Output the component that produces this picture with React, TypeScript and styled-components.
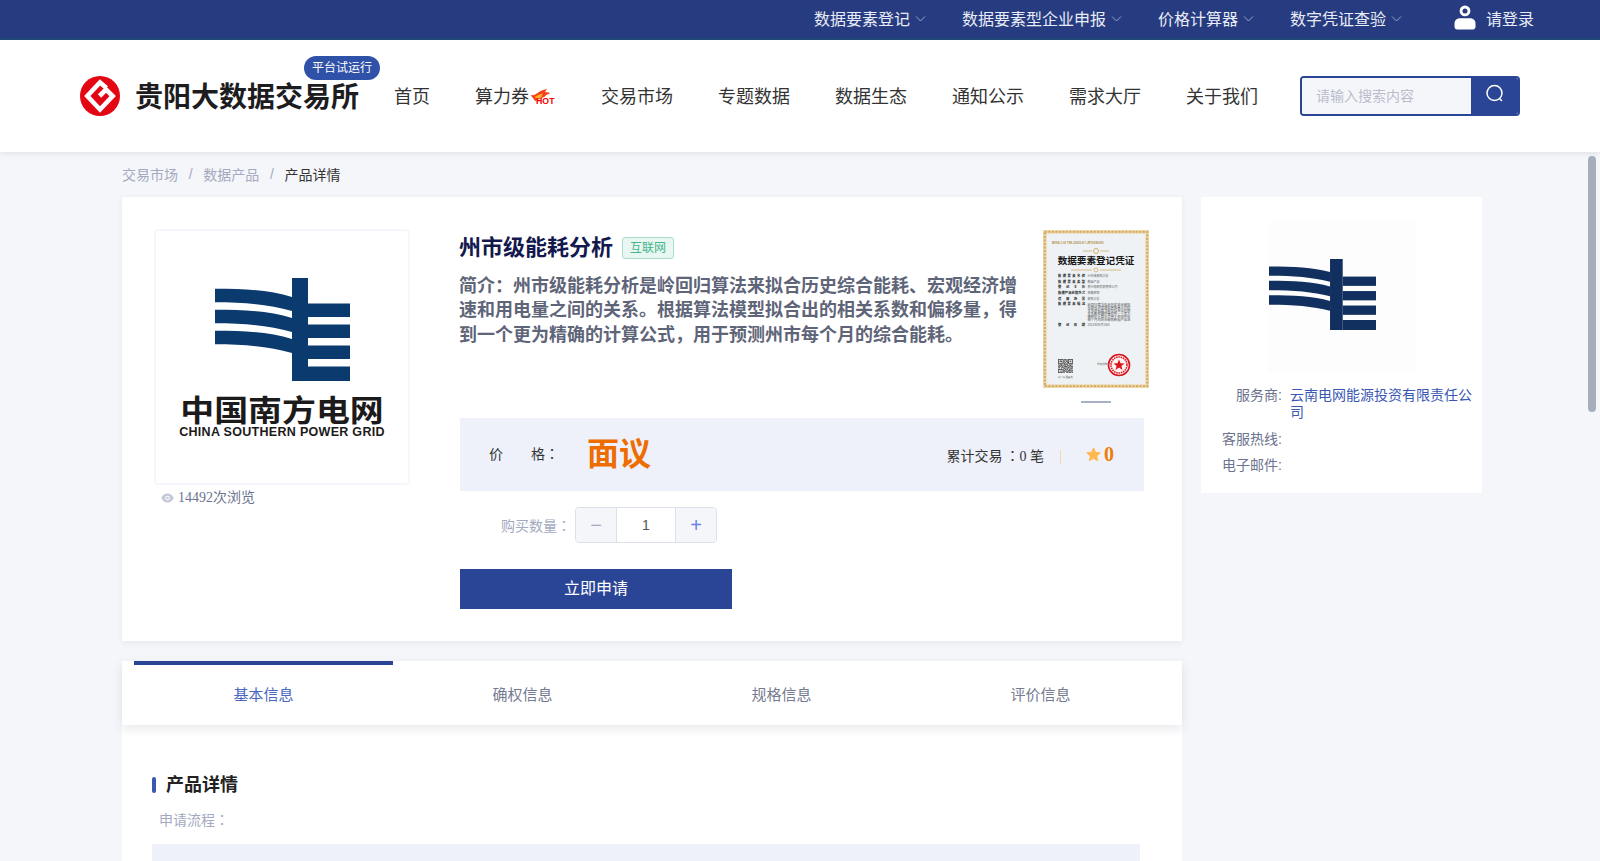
import React from 'react';
import styled, { createGlobalStyle } from 'styled-components';

const SANS = `"Liberation Sans", "Noto Sans CJK SC", sans-serif`;
const SERIF = `"Liberation Serif", "Noto Sans CJK SC", serif`;

const GlobalStyle = createGlobalStyle`
    html, body {
        margin: 0;
        padding: 0;
        height: 100%;
        overflow: hidden;
        background: #f5f6fa;
        font-family: ${SANS};
        text-spacing-trim: space-all;
    }
    * {
        box-sizing: border-box;
    }
`;

const topLinks = ['数据要素登记', '数据要素型企业申报', '价格计算器', '数字凭证查验'];
const navLinks = ['交易市场', '专题数据', '数据生态', '通知公示', '需求大厅', '关于我们'];
const tabs = ['基本信息', '确权信息', '规格信息', '评价信息'];

const Chevron = () => (
    <svg width="11" height="11" viewBox="0 0 11 11" fill="none" stroke="#9aa5c8" strokeWidth="1">
        <path d="M1 3.5 L5.5 8 L10 3.5" />
    </svg>
);

const UserIcon = () => (
    <svg width="22" height="26" viewBox="0 0 22 26" fill="#fff">
        <path d="M11 0.5a5.4 5.4 0 1 1 0 10.8a5.4 5.4 0 0 1 0-10.8zM11 3.4a2.5 2.5 0 1 0 0 5a2.5 2.5 0 0 0 0-5z" fillRule="evenodd" />
        <path d="M6 13.2h10c3.2 0 5.5 2.2 5.5 5.2v3.4c0 1.6-1.2 2.7-2.6 2.7H3.100c-1.400 0-2.600-1.100-2.600-2.700v-3.400c0-3 2.300-5.200 5.500-5.200z" />
    </svg>
);

const BrandMark = () => (
    <svg width="40" height="40" viewBox="0 0 40 40">
        <circle cx="20" cy="20" r="20" fill="#e30613" />
        <path d="M26.500 12 L20 6.500 L7.300 20 L20 33.500 L32.700 20 L26 13.500 L19.500 20" fill="none" stroke="#fff" strokeWidth="4.600" />
    </svg>
);

const HotIcon = () => (
    <svg width="27" height="16" viewBox="0 0 27 16">
        <path d="M0.500 6 C4 7 6 5 9 3 C11 1.500 14 0.800 17.500 0 C15.500 1.500 15 2.500 15.500 3.500 C17.500 3 19 3.500 20 4.500 C18 5 16 5.500 15 7.500 L5 12 C3.500 9.500 2 8 0.500 6 Z" fill="#f4401a" />
        <path d="M5 7.500 C7.500 6.500 10 5 13 4.500 C12 6 12 7 11 8.500 L6 10 Z" fill="#ffb020" />
        <text x="6" y="14.500" fontFamily="Liberation Sans" fontWeight="bold" fontSize="8.500" fill="#f00000" textLength="18.500" lengthAdjust="spacingAndGlyphs">HOT</text>
    </svg>
);

const SearchIcon = () => (
    <svg width="20" height="20" viewBox="0 0 20 20" fill="none" stroke="#fff" strokeWidth="1.500">
        <circle cx="9.500" cy="9" r="7.500" />
        <path d="M14.500 14.500 L17 17" />
    </svg>
);

const EyeIcon = () => (
    <svg width="13" height="10" viewBox="0 0 13 10">
        <path d="M6.500 0.500C3.600 0.500 1.400 2.400 0.300 5c1.100 2.600 3.300 4.500 6.200 4.500s5.100-1.900 6.200-4.500C11.600 2.400 9.400 0.500 6.500 0.500z" fill="#c4c9da" />
        <circle cx="6.500" cy="5" r="2.300" fill="#fff" />
        <circle cx="6.500" cy="5" r="1.300" fill="#c4c9da" />
    </svg>
);

const StarIcon = () => (
    <svg width="15" height="15" viewBox="0 0 24 24" fill="#ffb84d">
        <path d="M12 1.500l3.200 7 7.600.8-5.700 5.100 1.600 7.500L12 18l-6.700 3.900 1.600-7.500L1.200 9.300l7.600-.8z" stroke="#ffb84d" strokeWidth="1.500" strokeLinejoin="round" />
    </svg>
);

const GridMark: React.FC<{ color: string; width: number; height: number }> = ({ color, width, height }) => (
    <svg width={width} height={height} viewBox="0 0 135 103" preserveAspectRatio="none" fill={color}>
        <rect x="77" y="0" width="16" height="103" />
        {[0, 21, 42].map(dy => (
            <path key={dy} transform={`translate(0 ${dy})`} d="M0 10.700C30 10.700 55 12 77 19L77 33C55 26.500 30 24.300 0 24.300Z" />
        ))}
        {[25.5, 46.5, 67.5, 88.5].map(y => (
            <rect key={y} x="93" y={y} width="42" height={y === 88.5 ? 14.5 : 13.5} />
        ))}
    </svg>
);

const qrRows = [
    '1111111011010111111',
    '1000001001101100001',
    '1011101110010101101',
    '1011101010111101101',
    '1000001101001100001',
    '1111111010101111111',
    '0001000111010000100',
    '1101110010111011011',
    '0110101101001101100',
    '1011010011110010111',
    '0100111100101101001',
    '1110001011010110110',
    '0000100110101001011',
    '1111111001011010100',
    '1000001110100111011',
    '1011101011011001101',
    '1000001100110110010',
    '1111111010011011101',
];

const certRows = [
    ['数据要素名称', '州市级能耗分析', 47],
    ['数据要素类型', '数据产品', 52.5],
    ['登记主体', '贵州电网有限责任公司', 58],
    ['数据产品获取方式', '按需获取', 64],
    ['适用场景', '能耗分析', 69.5],
    ['数据要素描述', '', 75],
    ['登记日期', '2023年05月26日', 95.5],
];

const certText = [
    '岭回归算法拟合历史综合能耗',
    '宏观经济增速和用电量之间的',
    '关系根据算法模型拟合出的相',
    '关系数和偏移量得到一个更为',
    '精确的计算公式用于预测州市',
    '每个月的综合能耗数据产品进',
];

const Certificate = () => (
    <svg width="106" height="158" viewBox="0 0 106 158">
        <rect width="106" height="158" fill="#eef2f5" />
        <rect x="1.800" y="1.800" width="102.400" height="154.400" fill="none" stroke="#ecd5a6" strokeWidth="3.600" />
        <rect x="1.800" y="1.800" width="102.400" height="154.400" fill="none" stroke="#d2a861" strokeWidth="1.800" strokeDasharray="2 1.500" />
        <text x="9" y="13.500" fontSize="2.800" fontFamily="Liberation Sans" fontWeight="bold" fill="#b08a3c">BXSS-1-02 TXK-20230-8 7-JRY0299-RO</text>
        <path d="M40 21h9M57 21h9" stroke="#d0b06a" strokeWidth="0.800" />
        <circle cx="53" cy="21" r="2.500" fill="none" stroke="#d0b06a" strokeWidth="1" />
        <text x="53" y="33.500" textAnchor="middle" fontSize="9.600" fontWeight="bold" fontFamily="Noto Sans CJK SC" fill="#161616">数据要素登记凭证</text>
        <path d="M28 40h21M57 40h21" stroke="#d0b06a" strokeWidth="0.800" />
        <circle cx="53" cy="40" r="2" fill="none" stroke="#d0b06a" strokeWidth="0.800" />
        {certRows.map(([label, value, y]) => (
            <g key={label as string} fontFamily="Noto Sans CJK SC">
                <text x="15" y={y as number} fontSize="3.300" fontWeight="bold" fill="#222" textLength="27" lengthAdjust="spacing">{label}</text>
                <text x="44.500" y={y as number} fontSize="3" fill="#666">{value}</text>
            </g>
        ))}
        {certText.map((line, i) => (
            <text key={line} x="44.500" y={76 + i * 3} fontSize="3.300" fontFamily="Noto Sans CJK SC" fill="#555">{line}</text>
        ))}
        <g transform="translate(15 129)" fill="#1c1c1c">
            <rect width="15" height="15" fill="#fff" />
            {qrRows.map((row, y) =>
                row.split('').map((c, x) => (c === '1' ? <rect key={`${x}-${y}`} x={x * 0.78} y={y * 0.78} width="0.800" height="0.800" /> : null))
            )}
        </g>
        <text x="15" y="147.500" fontSize="2.400" fontFamily="Noto Sans CJK SC" fill="#555">扫一扫 验真伪</text>
        <text x="54" y="135" fontSize="2.600" fontFamily="Noto Sans CJK SC" fill="#555">登记机构</text>
        <circle cx="76" cy="135" r="10.500" fill="#fdf3f2" stroke="#d8141c" strokeWidth="1.600" />
        <circle cx="76" cy="135" r="8" fill="none" stroke="#d8141c" strokeWidth="1.600" strokeDasharray="1.500 0.800" />
        <path d="M76 129.500l1.500 3.800 4 .2-3.100 2.500 1.100 3.900-3.500-2.300-3.500 2.300 1.100-3.900-3.100-2.500 4-.2z" fill="#d8141c" />
    </svg>
);

const App: React.FC = () => {
    return (
        <Shell>
            <GlobalStyle />
            <TopBar>
                {topLinks.map(link => (
                    <TopLink key={link}>
                        {link}
                        <Chevron />
                    </TopLink>
                ))}
                <LoginLink>
                    <UserIcon />
                    请登录
                </LoginLink>
            </TopBar>
            <Header>
                <Brand>
                    <BrandMark />
                    <BrandName>贵阳大数据交易所</BrandName>
                    <TrialBadge>平台试运行</TrialBadge>
                </Brand>
                <Nav>
                    <NavLink>首页</NavLink>
                    <NavLink>
                        算力券
                        <HotIcon />
                    </NavLink>
                    {navLinks.map(link => (
                        <NavLink key={link}>{link}</NavLink>
                    ))}
                </Nav>
                <SearchBox>
                    <SearchInput placeholder="请输入搜索内容" />
                    <SearchButton>
                        <SearchIcon />
                    </SearchButton>
                </SearchBox>
            </Header>
            <Scroller>
                <Page>
                    <Breadcrumb>
                        <Crumb>交易市场</Crumb>
                        <CrumbSep>/</CrumbSep>
                        <Crumb>数据产品</Crumb>
                        <CrumbSep>/</CrumbSep>
                        <Crumb $current>产品详情</Crumb>
                    </Breadcrumb>
                    <Columns>
                        <MainColumn>
                            <ProductCard>
                                <Gallery>
                                    <LogoBox>
                                        <GridMark color="#0b3a6f" width={135} height={103} />
                                        <LogoCn>中国南方电网</LogoCn>
                                        <LogoEn>CHINA SOUTHERN POWER GRID</LogoEn>
                                    </LogoBox>
                                    <Views>
                                        <EyeIcon />
                                        14492次浏览
                                    </Views>
                                </Gallery>
                                <Info>
                                    <InfoTop>
                                        <InfoText>
                                            <TitleRow>
                                                <Title>州市级能耗分析</Title>
                                                <Tag>互联网</Tag>
                                            </TitleRow>
                                            <Intro>
                                                简介：州市级能耗分析是岭回归算法来拟合历史综合能耗、宏观经济增速和用电量之间的关系。根据算法模型拟合出的相关系数和偏移量，得到一个更为精确的计算公式，用于预测州市每个月的综合能耗。
                                            </Intro>
                                        </InfoText>
                                        <CertColumn>
                                            <Certificate />
                                            <CertDot />
                                        </CertColumn>
                                    </InfoTop>
                                    <PriceBox>
                                        <PriceLabel>
                                            <span>价</span>
                                            <span>格<Punct>：</Punct></span>
                                        </PriceLabel>
                                        <PriceValue>面议</PriceValue>
                                        <Stats>
                                            <TradeCount>累计交易<TradeColon>：</TradeColon>0 笔</TradeCount>
                                            <StatSep />
                                            <StarIcon />
                                            <Score>0</Score>
                                        </Stats>
                                    </PriceBox>
                                    <QtyRow>
                                        <QtyLabel>购买数量<Punct>：</Punct></QtyLabel>
                                        <Stepper>
                                            <StepButton $muted>−</StepButton>
                                            <StepValue>1</StepValue>
                                            <StepButton>+</StepButton>
                                        </Stepper>
                                    </QtyRow>
                                    <ApplyButton>立即申请</ApplyButton>
                                </Info>
                            </ProductCard>
                            <TabBar>
                                {tabs.map((tab, i) => (
                                    <Tab key={tab} $active={i === 0}>
                                        {tab}
                                    </Tab>
                                ))}
                            </TabBar>
                            <DetailCard>
                                <SectionTitle>产品详情</SectionTitle>
                                <SubLabel>申请流程<Punct>：</Punct></SubLabel>
                                <FlowBlock />
                            </DetailCard>
                        </MainColumn>
                        <SideCard>
                            <SideLogo>
                                <GridMark color="#12305f" width={107} height={71} />
                            </SideLogo>
                            <SideRows>
                                <SideLabel>服务商:</SideLabel>
                                <SideValue>云南电网能源投资有限责任公司</SideValue>
                                <SideLabel>客服热线:</SideLabel>
                                <SideValue />
                                <SideLabel>电子邮件:</SideLabel>
                                <SideValue />
                            </SideRows>
                        </SideCard>
                    </Columns>
                </Page>
            </Scroller>
            <ScrollThumb />
        </Shell>
    );
};

const Punct = styled.span`
    font-family: "Noto Sans CJK TC", sans-serif;
`;

const TradeColon = styled(Punct)`
    margin-left: 3px;
`;

const Shell = styled.div`
    position: relative;
    height: 100vh;
    display: flex;
    flex-direction: column;
    overflow: hidden;
`;

const TopBar = styled.div`
    flex: none;
    height: 40px;
    padding: 0 66px 2px 0;
    display: flex;
    align-items: center;
    justify-content: flex-end;
    background: #273c80;
    border-bottom: 2px solid #1f4a7c;
    color: #e9ecf6;
    font-size: 16px;
`;

const TopLink = styled.div`
    display: flex;
    align-items: center;
    gap: 5px;
    margin-right: 36px;
    white-space: nowrap;
`;

const LoginLink = styled.div`
    display: flex;
    align-items: center;
    gap: 10px;
    margin-left: 16px;
`;

const Header = styled.header`
    flex: none;
    position: relative;
    z-index: 2;
    height: 112px;
    padding: 0 80px;
    display: flex;
    align-items: center;
    background: #fff;
    box-shadow: 0 1px 6px rgba(40, 50, 90, 0.12);
`;

const Brand = styled.div`
    position: relative;
    display: flex;
    align-items: center;
    gap: 15px;
`;

const BrandName = styled.div`
    margin-top: -2px;
    font-size: 28px;
    font-weight: bold;
    color: #1d1d1f;
    white-space: nowrap;
`;

const TrialBadge = styled.span`
    position: absolute;
    left: 224px;
    top: -20px;
    width: 76px;
    height: 24px;
    border-radius: 12px;
    background: #2f52a8;
    color: #fff;
    font-size: 12px;
    line-height: 24px;
    text-align: center;
    white-space: nowrap;
`;

const Nav = styled.nav`
    display: flex;
    align-items: center;
    gap: 45px;
    margin-left: 35px;
    margin-top: -2px;
`;

const NavLink = styled.a`
    display: flex;
    align-items: center;
    font-size: 18px;
    color: #333;
    white-space: nowrap;

    svg {
        margin: 4px -1px 0 1px;
    }
`;

const SearchBox = styled.div`
    flex: none;
    width: 220px;
    height: 40px;
    margin-left: auto;
    display: flex;
    border: 2px solid #2a4595;
    border-radius: 4px;
    overflow: hidden;
`;

const SearchInput = styled.input`
    flex: 1;
    min-width: 0;
    padding: 0 14px;
    border: none;
    outline: none;
    background: #f5f6fa;
    font-family: ${SANS};
    font-size: 14px;

    &::placeholder {
        color: #b9bdcc;
    }
`;

const SearchButton = styled.button`
    flex: none;
    width: 47px;
    padding: 0 0 4px;
    border: none;
    background: #2a4595;
    display: flex;
    align-items: center;
    justify-content: center;
`;

const Scroller = styled.main`
    flex: 1;
    min-height: 0;
    overflow-y: auto;
    scrollbar-width: none;
`;

const ScrollThumb = styled.div`
    position: absolute;
    top: 156px;
    right: 4px;
    width: 8px;
    height: 256px;
    border-radius: 4px;
    background: #a6afbb;
`;

const Page = styled.div`
    width: 1360px;
    margin-left: 122px;
    padding-bottom: 40px;
`;

const Breadcrumb = styled.div`
    height: 45px;
    padding-bottom: 2px;
    display: flex;
    align-items: center;
    font-size: 14px;
`;

const Crumb = styled.span<{ $current?: boolean }>`
    color: ${props => (props.$current ? '#333' : '#a3a9bf')};
`;

const CrumbSep = styled.span`
    margin: 0 10.7px;
    color: #a3a9bf;
`;

const Columns = styled.div`
    display: flex;
    align-items: flex-start;
    gap: 19px;
`;

const MainColumn = styled.div`
    flex: none;
    width: 1060px;
`;

const ProductCard = styled.section`
    height: 444px;
    padding: 32px 38px 32px 32px;
    display: flex;
    gap: 49px;
    background: #fff;
    box-shadow: 0 2px 6px rgba(40, 50, 90, 0.08);
`;

const Gallery = styled.div`
    flex: none;
    width: 256px;
`;

const LogoBox = styled.div`
    height: 256px;
    padding-top: 47px;
    display: flex;
    flex-direction: column;
    align-items: center;
    border: 2px solid #f6f7fc;
    border-radius: 4px;
`;

const LogoCn = styled.div`
    margin-top: 15px;
    font-size: 30px;
    font-weight: bold;
    line-height: 29px;
    color: #1c1a1a;
    white-space: nowrap;
    transform: scaleX(1.13);
`;

const LogoEn = styled.div`
    font-size: 12.500px;
    font-weight: bold;
    line-height: 14px;
    letter-spacing: 0.3px;
    color: #1c1a1a;
    white-space: nowrap;
`;

const Views = styled.div`
    margin: 5px 0 0 7px;
    display: flex;
    align-items: center;
    gap: 4px;
    font-family: ${SERIF};
    font-size: 14px;
    line-height: 16px;
    color: #6b7390;
`;

const Info = styled.div`
    flex: none;
    width: 685px;
`;

const InfoTop = styled.div`
    width: 690px;
    height: 189px;
    display: flex;
    justify-content: space-between;
`;

const InfoText = styled.div`
    width: 560px;
`;

const TitleRow = styled.div`
    display: flex;
    align-items: center;
    gap: 9px;
    height: 34px;
`;

const Title = styled.h1`
    margin: -2px 0 0;
    font-size: 22px;
    font-weight: bold;
    color: #13194d;
`;

const Tag = styled.span`
    margin-top: 3px;
    width: 52px;
    height: 22px;
    border: 1px solid #a8dcc9;
    border-radius: 3px;
    background: #e9f7f2;
    color: #45b48c;
    font-size: 12px;
    line-height: 20px;
    text-align: center;
`;

const Intro = styled.p`
    margin: 10.5px 0 0;
    font-size: 18px;
    font-weight: bold;
    line-height: 24.500px;
    color: #5f6579;
`;

const CertColumn = styled.div`
    flex: none;
    width: 106px;
    padding-top: 1px;
    display: flex;
    flex-direction: column;
    align-items: center;

    svg {
        flex: none;
    }
`;

const CertDot = styled.span`
    margin-top: 13px;
    width: 30px;
    height: 2px;
    background: #a8b0c8;
`;

const PriceBox = styled.div`
    height: 73px;
    margin-left: 1px;
    padding: 0 30px 0 29px;
    display: flex;
    align-items: center;
    background: #eef1fa;
`;

const PriceLabel = styled.div`
    width: 70px;
    margin-top: -4px;
    display: flex;
    justify-content: space-between;
    font-family: ${SERIF};
    font-size: 14px;
    color: #333;
`;

const PriceValue = styled.div`
    margin: -8px 0 0 28px;
    font-size: 32px;
    font-weight: bold;
    color: #ed6d00;
`;

const Stats = styled.div`
    margin-left: auto;
    display: flex;
    align-items: center;
    font-family: ${SERIF};
    color: #333;
`;

const TradeCount = styled.span`
    font-size: 14px;
`;

const StatSep = styled.span`
    width: 1px;
    height: 14px;
    margin: 4px 25px 0 16px;
    background: #f2d9a8;
`;

const Score = styled.span`
    margin-left: 3px;
    font-size: 20px;
    font-weight: bold;
    color: #ed7d0a;
`;

const QtyRow = styled.div`
    margin-top: 16px;
    display: flex;
    align-items: center;
`;

const QtyLabel = styled.span`
    width: 116px;
    padding-right: 4px;
    text-align: right;
    font-size: 14px;
    color: #a3a9bf;
`;

const Stepper = styled.div`
    width: 142px;
    height: 36px;
    display: flex;
    border: 1px solid #dcdfe8;
    border-radius: 4px;
    overflow: hidden;
`;

const StepButton = styled.span<{ $muted?: boolean }>`
    flex: none;
    width: 40px;
    display: flex;
    align-items: center;
    justify-content: center;
    background: #f5f6fa;
    font-size: 20px;
    color: ${props => (props.$muted ? '#a3a9bf' : '#6b80e8')};
`;

const StepValue = styled.span`
    flex: 1;
    border-left: 1px solid #dcdfe8;
    border-right: 1px solid #dcdfe8;
    display: flex;
    align-items: center;
    justify-content: center;
    font-size: 14px;
    color: #555;
`;

const ApplyButton = styled.button`
    display: block;
    margin: 26px 0 0 1px;
    width: 272px;
    height: 40px;
    padding: 0 0 4px;
    border: none;
    background: #2a4595;
    color: #fff;
    font-family: ${SANS};
    font-size: 16px;
`;

const TabBar = styled.div`
    margin-top: 20px;
    height: 64px;
    padding: 0 12px;
    display: flex;
    background: #fff;
    box-shadow: 0 4px 10px rgba(40, 50, 90, 0.1);
    position: relative;
`;

const Tab = styled.div<{ $active?: boolean }>`
    flex: 1;
    padding-bottom: 4px;
    display: flex;
    align-items: center;
    justify-content: center;
    border-top: 4px solid ${props => (props.$active ? '#2a4595' : 'transparent')};
    font-size: 15px;
    color: ${props => (props.$active ? '#4a66c0' : '#757b90')};
`;

const DetailCard = styled.section`
    padding: 48px 30px 0;
    height: 1150px;
    background: #fff;
`;

const SectionTitle = styled.h2`
    margin: 0;
    padding-left: 14px;
    position: relative;
    font-size: 18px;
    font-weight: bold;
    line-height: 24px;
    color: #222;

    &::before {
        content: '';
        position: absolute;
        left: 0;
        top: 4px;
        width: 4px;
        height: 16px;
        border-radius: 2px;
        background: #3a57b4;
    }
`;

const SubLabel = styled.div`
    margin: 10px 0 0 7px;
    font-size: 14px;
    line-height: 24px;
    color: #a3a9bf;
`;

const FlowBlock = styled.div`
    margin-top: 12px;
    width: 988px;
    height: 800px;
    background: #eef1fa;
`;

const SideCard = styled.aside`
    flex: none;
    width: 281px;
    height: 296px;
    background: #fff;
`;

const SideLogo = styled.div`
    width: 148px;
    height: 150px;
    margin: 25px 0 0 67px;
    padding: 37px 0 0 1px;
    background: #fdfdfd;
`;

const SideRows = styled.div`
    margin: 15px 10px 0 20px;
    display: grid;
    grid-template-columns: 61px 1fr;
    column-gap: 8px;
    row-gap: 9.5px;
    font-size: 14px;
    line-height: 17px;
`;

const SideLabel = styled.div`
    text-align: right;
    color: #6b7390;
    white-space: nowrap;
`;

const SideValue = styled.div`
    color: #3a57b4;
`;

export default App;
